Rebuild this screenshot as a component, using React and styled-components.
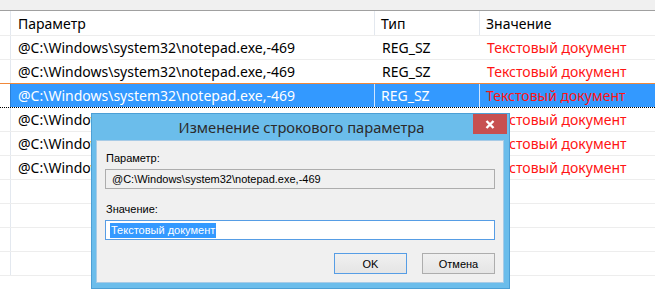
import React from "react";
import styled, { createGlobalStyle } from "styled-components";

const Global = createGlobalStyle`
  html, body { margin: 0; padding: 0; background: #fff; }
  body { font-family: "Noto Sans", "Open Sans", sans-serif; }
`;

const Window = styled.div`
  position: relative;
  width: 655px;
  height: 289px;
  overflow: hidden;
  background: #fff;
  display: flex;
  flex-direction: column;
`;

const TopStrip = styled.div`
  height: 10px;
  background: #f0f0f0;
  border-bottom: 1px solid #a0a0a0;
  flex: none;
`;

const Row = styled.div`
  display: grid;
  grid-template-columns: 11px 364px 105px 1fr;
  height: ${(p) => (p.$header ? 25 : 24)}px;
  box-sizing: border-box;
  border-bottom: 1px ${(p) => (p.$selected ? "dotted #000" : "solid #ededed")};
  box-shadow: ${(p) => (p.$selected ? "0 -1px 0 #f0883a" : "none")};
  position: relative;
  flex: none;
  font-size: 14px;
  color: #000;
`;

const Gutter = styled.div`
  border-right: 1px solid ${(p) => (p.$selected ? "#2a7fd6" : "#e3e8ef")};
`;

const Cell = styled.div`
  display: flex;
  align-items: center;
  padding-left: 6px;
  white-space: nowrap;
  overflow: hidden;
  background: ${(p) => (p.$selected ? "#3399ff" : "transparent")};
  color: ${(p) => (p.$red ? "#ff1414" : p.$selected ? "#fff" : "#000")};
  border-left: 1px solid ${(p) => (p.$line ? (p.$selected ? "#cfe5ff" : "#e3e8ef") : "transparent")};
  margin-left: ${(p) => (p.$line ? "-1px" : "0")};
`;

const Dialog = styled.div`
  position: absolute;
  left: 91px;
  top: 113px;
  width: 419px;
  height: 176px;
  box-sizing: border-box;
  background: #6bbdeb;
  border: 1px solid #4c9fd5;
  display: flex;
  flex-direction: column;
  font-family: "Liberation Sans", Arial, sans-serif;
`;

const TitleBar = styled.div`
  height: 26px;
  position: relative;
  display: flex;
  align-items: center;
  justify-content: center;
  font-family: "Noto Sans", "Open Sans", sans-serif;
  font-size: 14.7px;
  color: #2b2b2b;
  padding-left: 2px;
  flex: none;
`;

const CloseButton = styled.div`
  position: absolute;
  right: 2px;
  top: 0;
  width: 34px;
  height: 20px;
  background: #c75050;
  display: flex;
  align-items: center;
  justify-content: center;
`;

const Body = styled.div`
  flex: 1;
  margin: 0 5px 5px 4px;
  background: #f0f0f0;
  border: 1px solid #a8cbe6;
  padding: 0 8px 0 8px;
  display: flex;
  flex-direction: column;
`;

const Label = styled.div`
  font-size: 11px;
  color: #000;
  margin-top: ${(p) => p.$mt}px;
  height: 15px;
  line-height: 15px;
  padding-left: 1px;
`;

const Field = styled.div`
  height: 20px;
  box-sizing: border-box;
  margin-top: ${(p) => p.$mt}px;
  border: 1px solid ${(p) => (p.$focus ? "#569de5" : "#adadad")};
  background: ${(p) => (p.$focus ? "#fff" : "#f0f0f0")};
  display: flex;
  align-items: center;
  padding-left: ${(p) => (p.$focus ? 4 : 6)}px;
  font-size: 11px;
  color: #000;
  white-space: nowrap;
`;

const Selected = styled.span`
  background: #3399ff;
  color: #fff;
  line-height: 15px;
  padding: 0 1px;
`;

const Buttons = styled.div`
  display: flex;
  justify-content: flex-end;
  gap: 15px;
  margin-top: 13px;
`;

const Button = styled.div`
  width: 73px;
  height: 21px;
  box-sizing: border-box;
  border: 1px solid ${(p) => (p.$default ? "#569de5" : "#adadad")};
  background: linear-gradient(#f0f0f0, #e5e5e5);
  display: flex;
  align-items: center;
  justify-content: center;
  font-size: 11px;
  color: #000;
`;

const rows = [
  { p: "@C:\\Windows\\system32\\notepad.exe,-469", t: "REG_SZ", v: "Текстовый документ" },
  { p: "@C:\\Windows\\system32\\notepad.exe,-469", t: "REG_SZ", v: "Текстовый документ" },
  { p: "@C:\\Windows\\system32\\notepad.exe,-469", t: "REG_SZ", v: "Текстовый документ", sel: true },
  { p: "@C:\\Windows\\system32\\notepad.exe,-469", t: "REG_SZ", v: "Текстовый документ" },
  { p: "@C:\\Windows\\system32\\notepad.exe,-469", t: "REG_SZ", v: "Текстовый документ" },
  { p: "@C:\\Windows\\system32\\notepad.exe,-469", t: "REG_SZ", v: "Текстовый документ" },
  { p: "", t: "", v: "" },
  { p: "", t: "", v: "" },
  { p: "", t: "", v: "" },
  { p: "", t: "", v: "" },
];

export default function App() {
  return (
    <>
      <Global />
      <Window>
        <TopStrip />
        <Row $header>
          <Gutter />
          <Cell>Параметр</Cell>
          <Cell $line>Тип</Cell>
          <Cell $line>Значение</Cell>
        </Row>
        {rows.map((r, i) => (
          <Row key={i} $selected={r.sel}>
            <Gutter $selected={r.sel} />
            <Cell $selected={r.sel}>{r.p}</Cell>
            <Cell $selected={r.sel} $line={r.sel}>{r.t}</Cell>
            <Cell $selected={r.sel} $line={r.sel} $red>{r.v}</Cell>
          </Row>
        ))}
        <Dialog>
          <TitleBar>
            Изменение строкового параметра
            <CloseButton>
              <svg width="10" height="9" viewBox="0 0 10 9">
                <path d="M1.5 1 L8.5 8 M8.5 1 L1.5 8" stroke="#fff" strokeWidth="2.4" />
              </svg>
            </CloseButton>
          </TitleBar>
          <Body>
            <Label $mt={10}>Параметр:</Label>
            <Field $mt={3}>@C:\Windows\system32\notepad.exe,-469</Field>
            <Label $mt={13}>Значение:</Label>
            <Field $mt={3} $focus>
              <Selected>Текстовый документ</Selected>
            </Field>
            <Buttons>
              <Button $default>OK</Button>
              <Button>Отмена</Button>
            </Buttons>
          </Body>
        </Dialog>
      </Window>
    </>
  );
}
